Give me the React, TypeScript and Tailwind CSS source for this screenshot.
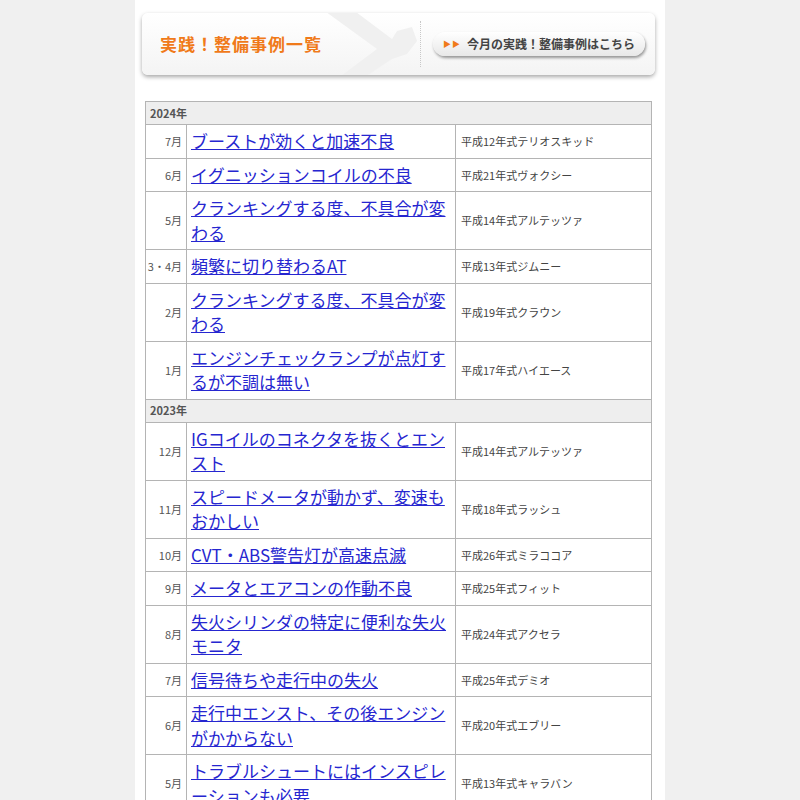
import React from "react";

type Row = [string, string, string];
const data: [string, Row[]][] = [
  ["2024年", [
    ["7月", "ブーストが効くと加速不良", "平成12年式テリオスキッド"],
    ["6月", "イグニッションコイルの不良", "平成21年式ヴォクシー"],
    ["5月", "クランキングする度、不具合が変わる", "平成14年式アルテッツァ"],
    ["3・4月", "頻繁に切り替わるAT", "平成13年式ジムニー"],
    ["2月", "クランキングする度、不具合が変わる", "平成19年式クラウン"],
    ["1月", "エンジンチェックランプが点灯するが不調は無い", "平成17年式ハイエース"],
  ]],
  ["2023年", [
    ["12月", "IGコイルのコネクタを抜くとエンスト", "平成14年式アルテッツァ"],
    ["11月", "スピードメータが動かず、変速もおかしい", "平成18年式ラッシュ"],
    ["10月", "CVT・ABS警告灯が高速点滅", "平成26年式ミラココア"],
    ["9月", "メータとエアコンの作動不良", "平成25年式フィット"],
    ["8月", "失火シリンダの特定に便利な失火モニタ", "平成24年式アクセラ"],
    ["7月", "信号待ちや走行中の失火", "平成25年式デミオ"],
    ["6月", "走行中エンスト、その後エンジンがかからない", "平成20年式エブリー"],
    ["5月", "トラブルシュートにはインスピレーションも必要", "平成13年式キャラバン"],
  ]],
];

export default function App() {
  return (
    <div className="min-h-[800px] bg-[#f0f0f0] flex justify-center" style={{ fontFamily: '"Noto Sans CJK JP", "Noto Sans", sans-serif' }}>
      <div className="w-[530px] bg-white pt-[13px] px-[7px] pb-4">
        <div className="relative h-[62px] w-[513px] rounded-[6px] bg-gradient-to-b from-white to-[#f4f4f4] shadow-[0_2px_4px_rgba(0,0,0,0.35)] flex items-center overflow-hidden">
          <svg className="absolute left-[180px] top-[-4px]" width="100" height="70" viewBox="0 0 100 70">
            <path d="M0 0 L30 0 L70 30 L75 22 L90 18 L95 32 L85 45 L70 50 L40 70 L15 70 L55 40 Z" fill="#f0f0f0" />
          </svg>
          <div className="relative pl-[18px] text-[17px] font-bold text-[#f07a1a] tracking-[1px] w-[278px]">実践！整備事例一覧</div>
          <div className="relative h-[46px] border-l border-dotted border-[#c8c8c8]" />
          <div className="relative ml-[12px] h-[24px] px-[10px] rounded-full bg-gradient-to-b from-white to-[#e8e8e8] shadow-[1px_2px_3px_rgba(0,0,0,0.4)] flex items-center gap-[6px] text-[12px] font-bold text-[#444]">
            <span className="text-[#f07a1a] text-[8px] tracking-[1px]">▶▶</span>今月の実践！整備事例はこちら
          </div>
        </div>
        <table className="mt-[26px] ml-[3px] w-[507px] border-collapse text-[11px]">
          <colgroup>
            <col className="w-[41px]" />
            <col className="w-[269px]" />
            <col />
          </colgroup>
          <tbody>
            {data.map(([year, rows]) => (
              <React.Fragment key={year}>
                <tr>
                  <td colSpan={3} className="h-[23px] border border-[#b4b4b4] bg-[#eeeeee] px-[4px] font-bold text-[#555]">{year}</td>
                </tr>
                {rows.map(([m, t, c], i) => (
                  <tr key={i}>
                    <td className="border border-[#b4b4b4] text-right pr-[4px] text-[#555] whitespace-nowrap">{m}</td>
                    <td className="border border-[#b4b4b4] px-[4px] py-[4px] text-[17px] leading-[24.5px]">
                      <a href="#" className="text-[#2626d0] underline">{t}</a>
                    </td>
                    <td className="border border-[#b4b4b4] px-[5px] text-[#444]">{c}</td>
                  </tr>
                ))}
              </React.Fragment>
            ))}
          </tbody>
        </table>
      </div>
    </div>
  );
}
